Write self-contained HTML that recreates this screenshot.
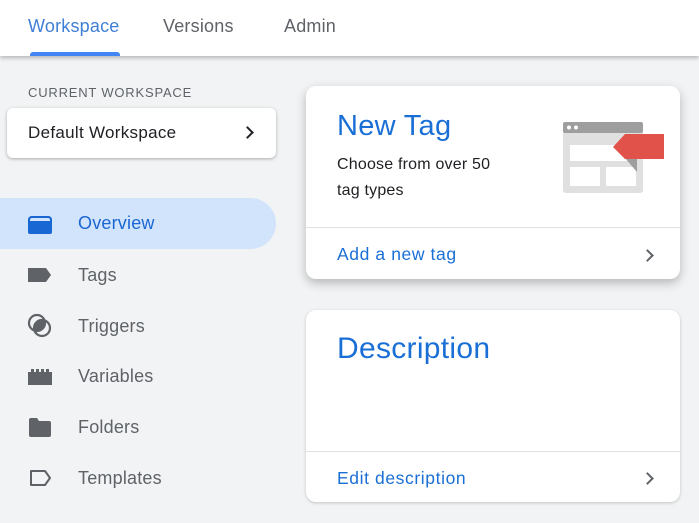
<!DOCTYPE html>
<html><head><style>
*{margin:0;padding:0;box-sizing:border-box}
body{width:699px;height:523px;overflow:hidden;background:#f1f3f4;font-family:"Liberation Sans",Arial,sans-serif;position:relative}
.hdr{position:absolute;left:0;top:0;width:699px;height:56px;background:#fff;box-shadow:0 2px 4px rgba(0,0,0,.25)}
.tab{position:absolute;top:16px;font-size:18px;color:#5f6368;letter-spacing:.2px}
.abs{position:absolute}
.nav{position:absolute;left:78px;font-size:18px;color:#5f6368;letter-spacing:.2px}
.card{position:absolute;left:306px;width:374px;background:#fff;border-radius:10px;box-shadow:0 1px 3px rgba(0,0,0,.2)}
.blue{color:#1a6fd6}
.chev{position:absolute;right:28px;width:9px;height:9px;border-right:2.4px solid #5f6368;border-top:2.4px solid #5f6368;transform:rotate(45deg)}
</style></head><body>
<div class="hdr">
<div class="tab" style="left:28px;color:#3f7fd6">Workspace</div>
<div class="tab" style="left:163px">Versions</div>
<div class="tab" style="left:284px">Admin</div>
<div class="abs" style="left:30px;top:52px;width:90px;height:4px;background:#4285f4;border-radius:3px 3px 0 0"></div>
</div>
<div class="abs" style="left:28px;top:85px;font-size:13px;letter-spacing:.8px;color:#5f6368">CURRENT WORKSPACE</div>
<div class="abs" style="left:7px;top:108px;width:269px;height:50px;background:#fff;border-radius:6px;box-shadow:0 1px 3px rgba(0,0,0,.3)">
<div class="abs" style="left:21px;top:15px;font-size:17px;color:#202124;letter-spacing:.3px">Default Workspace</div>
<div class="chev" style="right:24px;top:20px;border-color:#202124"></div>
</div>
<div class="abs" style="left:0;top:198px;width:276px;height:51px;background:#d2e3fc;border-radius:0 26px 26px 0"></div>
<div class="abs" style="left:28px;top:216px;width:24px;height:18px;background:#1967d2;border-radius:4px 4px 2px 2px"></div>
<div class="abs" style="left:28px;top:216px;width:24px;height:5px;border:2px solid #1967d2;border-bottom:none;background:#d2e3fc;border-radius:4px 4px 0 0"></div>
<div class="nav" style="top:213px;color:#1967d2">Overview</div>
<svg class="abs" style="left:27px;top:266px" width="26" height="18"><path d="M1 2h18l5 7-5 7H1z" fill="#5f6368"/></svg>
<div class="nav" style="top:265px">Tags</div>
<svg class="abs" style="left:27px;top:313px" width="26" height="26"><circle cx="10" cy="10" r="8" fill="none" stroke="#5f6368" stroke-width="2.2"/><circle cx="15" cy="15" r="8" fill="none" stroke="#5f6368" stroke-width="2.2"/><path d="M7 17a8 8 0 0 1 10-10a8 8 0 0 1-10 10z" fill="#5f6368"/></svg>
<div class="nav" style="top:316px">Triggers</div>
<svg class="abs" style="left:28px;top:369px" width="26" height="16"><path d="M0 3h3V0h3v3h2V0h3v3h2V0h3v3h2V0h3v3h3v13H0z" fill="#5f6368"/></svg>
<div class="nav" style="top:366px">Variables</div>
<svg class="abs" style="left:29px;top:418px" width="24" height="20"><path d="M0 2a2 2 0 0 1 2-2h6l2 3h10a2 2 0 0 1 2 2v12a2 2 0 0 1-2 2H2a2 2 0 0 1-2-2z" fill="#5f6368"/></svg>
<div class="nav" style="top:417px">Folders</div>
<svg class="abs" style="left:29px;top:470px" width="24" height="16"><path d="M2 1h14l5 7-5 7H2z" fill="none" stroke="#5f6368" stroke-width="2" stroke-linejoin="round"/></svg>
<div class="nav" style="top:468px">Templates</div>

<div class="card" style="top:86px;height:193px;box-shadow:0 4px 10px rgba(0,0,0,.25)">
<div class="abs blue" style="left:31px;top:24px;font-size:29px;letter-spacing:.3px">New Tag</div>
<div class="abs" style="left:31px;top:66px;font-size:16px;line-height:26px;color:#202124;letter-spacing:.2px">Choose from over 50<br>tag types</div>
<svg class="abs" style="left:257px;top:36px" width="105" height="72">
<rect x="0" y="0" width="80" height="71" rx="3" fill="#e0e0e0"/>
<rect x="0" y="0" width="80" height="11" rx="2" fill="#9e9e9e"/>
<circle cx="6" cy="5.5" r="2" fill="#fff"/><circle cx="13" cy="5.5" r="2" fill="#fff"/>
<rect x="7" y="23" width="66" height="16" fill="#fff"/>
<rect x="7" y="45" width="30" height="19" fill="#fff"/><rect x="43" y="45" width="30" height="19" fill="#fff"/>
<path d="M62 36l12 14v-14z" fill="#9e9e9e"/>
<path d="M50 25l12-13h39v25H62z" fill="#e0524a"/>
</svg>
<div class="abs" style="left:0;top:141px;width:374px;height:1px;background:#e0e0e0"></div>
<div class="abs blue" style="left:31px;top:158px;font-size:17.5px;letter-spacing:.6px">Add a new tag</div>
<div class="chev" style="top:165px"></div>
</div>

<div class="card" style="top:310px;height:192px">
<div class="abs blue" style="left:31px;top:22px;font-size:30px;letter-spacing:.3px">Description</div>
<div class="abs" style="left:0;top:141px;width:374px;height:1px;background:#e0e0e0"></div>
<div class="abs blue" style="left:31px;top:158px;font-size:17.5px;letter-spacing:.6px">Edit description</div>
<div class="chev" style="top:164px"></div>
</div>
</body></html>
